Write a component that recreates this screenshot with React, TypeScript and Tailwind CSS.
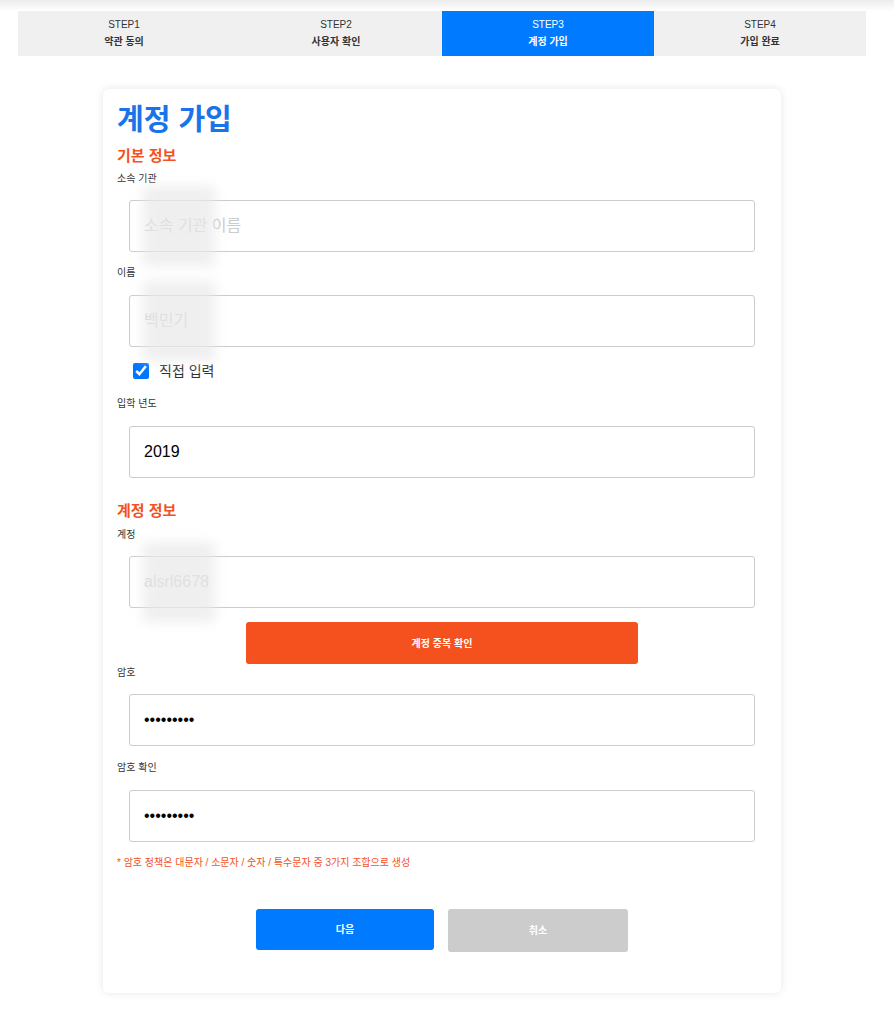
import React from 'react'

const steps = [
  { no: 'STEP1', label: '약관 동의' },
  { no: 'STEP2', label: '사용자 확인' },
  { no: 'STEP3', label: '계정 가입' },
  { no: 'STEP4', label: '가입 완료' }
]

const Label: React.FC<{ children: React.ReactNode; className?: string }> = ({ children, className = '' }) => (
  <div className={`text-[10px] leading-[14px] text-[#333] ${className}`}>{children}</div>
)

const Field: React.FC<{
  value?: string
  placeholder?: string
  type?: string
  className?: string
  blur?: boolean
}> = ({ value, placeholder, type = 'text', className = '', blur }) => (
  <div className={`relative mx-3 ${className}`}>
    <input
      type={type}
      readOnly
      value={value}
      placeholder={placeholder}
      className="block h-[52px] w-full rounded-[3px] border border-[#ccc] bg-white px-[14px] text-[16px] text-black placeholder:text-[#ccc] outline-none"
    />
    {blur && (
      <div className="pointer-events-none absolute left-[14px] top-[-14px] h-[80px] w-[72px] bg-[#e8e8e8]/70 blur-[6px]" />
    )}
  </div>
)

const App: React.FC = () => {
  return (
    <div className="min-h-screen bg-white font-['Liberation_Sans','Noto_Sans_CJK_KR',sans-serif]">
      <div className="h-[11px] bg-gradient-to-b from-[#ececec] to-white" />

      <div className="w-[884px]">
        <div className="mx-[18px] grid grid-cols-4 bg-[#f0f0f0]">
          {steps.map((s, i) => (
            <div
              key={s.no}
              className={`flex h-[45px] flex-col items-center justify-center gap-[5px] text-[10px] leading-[12px] ${
                i === 2 ? 'bg-[#007bff] text-white' : 'text-[#333]'
              }`}
            >
              <span>{s.no}</span>
              <span className="font-bold">{s.label}</span>
            </div>
          ))}
        </div>

        <div className="mx-auto mt-[33px] w-[678px] rounded-md bg-white px-[14px] pb-[41px] pt-[13px] shadow-[0_0_8px_rgba(0,0,0,0.1)]">
          <h1 className="text-[29px] font-bold leading-[36px] text-[#1a73e8]">계정 가입</h1>

          <h2 className="mt-2 text-[15px] font-bold leading-[20px] text-[#f4511e]">기본 정보</h2>
          <Label className="mt-[6px]">소속 기관</Label>
          <Field placeholder="소속 기관 이름" className="mt-[14px]" blur />

          <Label className="mt-[14px]">이름</Label>
          <Field placeholder="백민기" className="mt-[15px]" blur />

          <label className="ml-4 mt-[14px] flex h-5 items-center gap-[10px] text-[14px] text-[#333]">
            <input type="checkbox" checked readOnly className="h-4 w-4 accent-[#0075ff]" />
            직접 입력
          </label>

          <Label className="mt-[16px]">입학 년도</Label>
          <Field value="2019" className="mt-[15px]" />

          <h2 className="mt-[23px] text-[15px] font-bold leading-[20px] text-[#f4511e]">계정 정보</h2>
          <Label className="mt-[7px]">계정</Label>
          <Field placeholder="alsrl6678" className="mt-[14px]" blur />

          <div className="mt-[14px] flex justify-center">
            <button className="h-[42px] w-[392px] rounded-[3px] bg-[#f4511e] text-[10px] font-bold text-white">
              계정 중복 확인
            </button>
          </div>

          <Label className="mt-[2px]">암호</Label>
          <Field type="password" value="123456789" className="mt-[14px]" />

          <Label className="mt-[15px]">암호 확인</Label>
          <Field type="password" value="123456789" className="mt-[15px]" />

          <div className="mt-[14px] text-[10px] leading-[14px] text-[#f4511e]">
            * 암호 정책은 대문자 / 소문자 / 숫자 / 특수문자 중 3가지 조합으로 생성
          </div>

          <div className="mt-[39px] flex items-start justify-center gap-[14px]">
            <button className="h-[41px] w-[178px] rounded-[3px] bg-[#007bff] text-[10px] font-bold text-white">
              다음
            </button>
            <button className="h-[43px] w-[180px] rounded-[3px] bg-[#ccc] text-[10px] font-bold text-white">
              취소
            </button>
          </div>
        </div>
      </div>
    </div>
  )
}

export default App
